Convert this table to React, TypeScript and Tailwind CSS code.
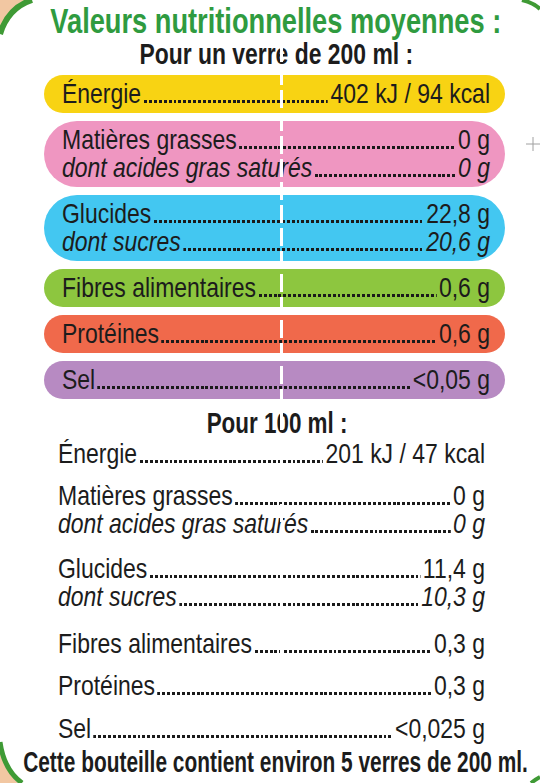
import React from "react"

type RowProps = { label: string; value: string; italic?: boolean }

// leader dots sit on the text baseline
const Row = ({ label, value, italic }: RowProps) => (
  <div className={italic ? "flex items-baseline italic" : "flex items-baseline"}>
    <span className="whitespace-nowrap">{label}</span>
    <span className="flex-1 mx-[3px] h-[3px] bg-[repeating-linear-gradient(90deg,#1a1a1a_0_3.6px,transparent_3.6px_6px)]" />
    <span className="whitespace-nowrap">{value}</span>
  </div>
)

const pills = [
  { bg: "bg-[#f8d313]", rows: [{ label: "Énergie", value: "402 kJ / 94 kcal" }] },
  {
    bg: "bg-[#ef96c1]",
    rows: [
      { label: "Matières grasses", value: "0 g" },
      { label: "dont acides gras saturés ", value: "0 g", italic: true },
    ],
  },
  {
    bg: "bg-[#43c7f1]",
    rows: [
      { label: "Glucides", value: "22,8 g" },
      { label: "dont sucres ", value: "20,6 g", italic: true },
    ],
  },
  { bg: "bg-[#8dc63f]", rows: [{ label: "Fibres alimentaires ", value: "0,6 g" }] },
  { bg: "bg-[#f0694b]", rows: [{ label: "Protéines", value: "0,6 g" }] },
  { bg: "bg-[#b78ac2]", rows: [{ label: "Sel", value: "<0,05 g" }] },
]

// spacing above each group in the "Pour 100 ml" list
const per100 = [
  { mt: "", rows: [{ label: "Énergie", value: "201 kJ / 47 kcal" }] },
  {
    mt: "mt-[14px]",
    rows: [
      { label: "Matières grasses", value: "0 g" },
      { label: "dont acides gras saturés ", value: "0 g", italic: true },
    ],
  },
  {
    mt: "mt-[17px]",
    rows: [
      { label: "Glucides", value: "11,4 g" },
      { label: "dont sucres ", value: "10,3 g", italic: true },
    ],
  },
  { mt: "mt-[19px]", rows: [{ label: "Fibres alimentaires ", value: "0,3 g" }] },
  { mt: "mt-[14px]", rows: [{ label: "Protéines", value: "0,3 g" }] },
  { mt: "mt-[15px]", rows: [{ label: "Sel", value: "<0,025 g" }] },
]

export default function App() {
  return (
    <div className="relative w-[540px] h-[783px] overflow-hidden bg-white text-[#1c1c1c] font-['Liberation_Sans',Arial,sans-serif]">
      {/* corner decorations of the bottle label */}
      <svg className="absolute inset-0 pointer-events-none" width="540" height="783" viewBox="0 0 540 783">
        <path d="M0 0 H26 Q6 10 0 30 Z" fill="#f2c7a2" />
        <path d="M0 34 Q8 8 32 0" fill="none" stroke="#3f9a35" strokeWidth="6" />
        <path d="M522 0 Q534 3 540 9" fill="none" stroke="#3f9a35" strokeWidth="4" />
        <path d="M0 783 V752 Q6 772 18 783 Z" fill="#f2c7a2" />
        <path d="M0 742 Q4 770 22 783" fill="none" stroke="#3f9a35" strokeWidth="5" />
        <path d="M531 783 Q536 779 540 777" fill="none" stroke="#3f9a35" strokeWidth="4" />
        <path d="M526 144 H540 M533 137 V151" stroke="#a0a0a0" strokeWidth="1" />
      </svg>

      <div className="flex flex-col items-center pt-[2px] pl-[12px] font-bold">
        <h1 className="whitespace-nowrap text-[35px] leading-[37px] text-[#2f9b3f] scale-x-[0.778]">
          Valeurs nutritionnelles moyennes :
        </h1>
        <h2 className="whitespace-nowrap text-[29px] leading-[31px] scale-x-[0.79]">Pour un verre de 200 ml :</h2>
      </div>

      <div className="flex flex-col gap-[8px] ml-[44px] mr-[35px] mt-[5px] text-[28px] leading-[28px]">
        {pills.map((p, i) => (
          <div key={i} className={`${p.bg} rounded-full pl-[18px] pr-[15px] py-[5px]`}>
            <div className="w-[121.95%] origin-left scale-x-[0.82]">
              {p.rows.map((r, j) => (
                <Row key={j} {...r} />
              ))}
            </div>
          </div>
        ))}
      </div>

      <div className="flex justify-center mt-[9px] pl-[14px]">
        <h2 className="whitespace-nowrap text-[29px] leading-[31px] font-bold scale-x-[0.773]">Pour 100 ml :</h2>
      </div>

      <div className="ml-[58px] mr-[55px] mt-[1px] text-[28px] leading-[28px]">
        <div className="w-[121.95%] origin-left scale-x-[0.82] flex flex-col">
          {per100.map((g, i) => (
            <div key={i} className={g.mt}>
              {g.rows.map((r, j) => (
                <Row key={j} {...r} />
              ))}
            </div>
          ))}
        </div>
      </div>

      <div className="flex justify-center mt-[4px] pl-[12px]">
        <p className="whitespace-nowrap text-[29px] leading-[31px] font-bold scale-x-[0.72]">
          Cette bouteille contient environ 5 verres de 200 ml.
        </p>
      </div>

      {/* white dashed fold line */}
      <div className="absolute left-[280px] top-[44px] w-[3px] h-[620px] bg-[repeating-linear-gradient(180deg,#ffffff_0_18px,transparent_18px_23px)]" />
    </div>
  )
}
